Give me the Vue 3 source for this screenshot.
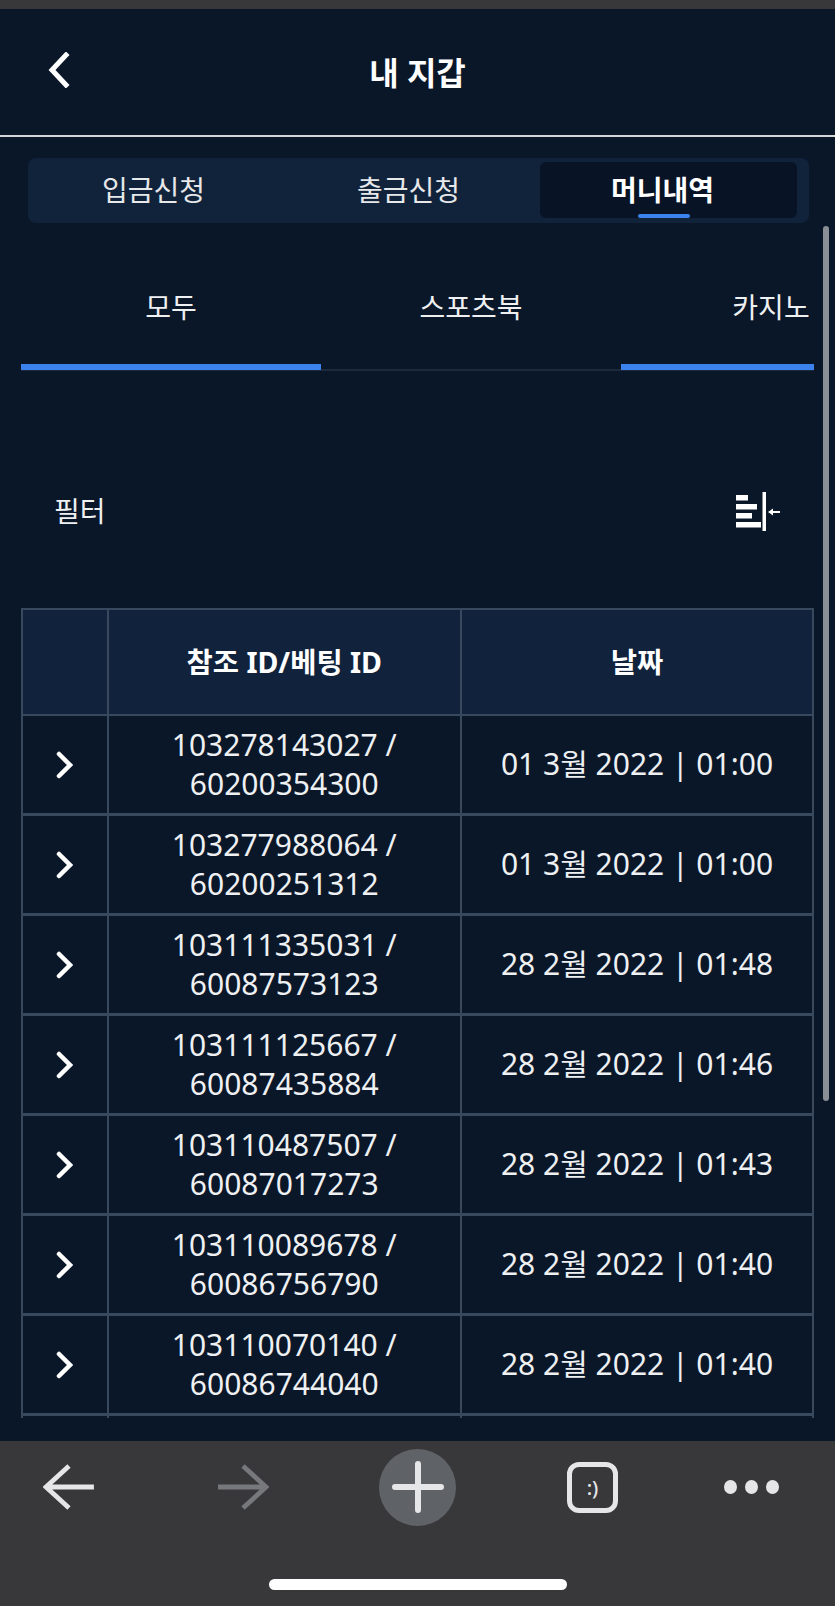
<script setup>
const rows = [
  ['103278143027', '60200354300', '01 3월 2022 | 01:00'],
  ['103277988064', '60200251312', '01 3월 2022 | 01:00'],
  ['103111335031', '60087573123', '28 2월 2022 | 01:48'],
  ['103111125667', '60087435884', '28 2월 2022 | 01:46'],
  ['103110487507', '60087017273', '28 2월 2022 | 01:43'],
  ['103110089678', '60086756790', '28 2월 2022 | 01:40'],
  ['103110070140', '60086744040', '28 2월 2022 | 01:40'],
]
</script>

<template>
  <div class="phone">
    <div class="top-strip"></div>
    <main class="page">
      <header class="header">
        <svg class="back" width="24" height="36" viewBox="0 0 24 36">
          <path d="M20 3 L6 18 L20 33" fill="none" stroke="#fff" stroke-width="5" stroke-linecap="square" />
        </svg>
        <h1>내 지갑</h1>
      </header>

      <nav class="tabs">
        <div class="tab">입금신청</div>
        <div class="tab">출금신청</div>
        <div class="tab active">머니내역<span class="tab-mark"></span></div>
      </nav>

      <div class="subtabs">
        <div class="subtab on">모두</div>
        <div class="subtab">스포츠북</div>
        <div class="subtab on">카지노</div>
      </div>

      <div class="filter">
        <span>필터</span>
        <svg width="44" height="40" viewBox="0 0 44 40">
          <g fill="#fff">
            <rect x="0" y="3" width="12" height="5.5" />
            <rect x="0" y="12" width="21" height="5.5" />
            <rect x="0" y="21" width="16" height="5.5" />
            <rect x="0" y="30" width="25" height="5.5" />
            <rect x="26.5" y="0" width="3.5" height="39" />
            <rect x="35" y="19" width="9" height="2" />
            <path d="M32 20 L37 16.5 V23.5 Z" />
          </g>
        </svg>
      </div>

      <div class="table-wrap">
        <table>
          <thead>
            <tr>
              <th class="col-arrow"></th>
              <th class="col-id">참조 ID/베팅 ID</th>
              <th>날짜</th>
            </tr>
          </thead>
          <tbody>
            <tr v-for="row in rows" :key="row[0]">
              <td>
                <svg class="chev" width="18" height="28" viewBox="0 0 18 28">
                  <path d="M4 3 L15 14 L4 25" fill="none" stroke="#fff" stroke-width="4.5" stroke-linecap="round" />
                </svg>
              </td>
              <td>{{ row[0] }} /<br />{{ row[1] }}</td>
              <td>{{ row[2] }}</td>
            </tr>
            <tr><td></td><td></td><td></td></tr>
          </tbody>
        </table>
      </div>

      <div class="scrollbar"></div>
    </main>

    <footer class="browser-bar">
      <div class="browser-icons">
        <svg width="52" height="46" viewBox="0 0 54 48">
          <path d="M27 2 L3 24 L27 46 M3 24 H53" fill="none" stroke="#e6e6e8" stroke-width="5" />
        </svg>
        <svg width="52" height="46" viewBox="0 0 54 48">
          <path d="M27 2 L51 24 L27 46 M1 24 H51" fill="none" stroke="#77787b" stroke-width="5" />
        </svg>
        <div class="plus">
          <svg width="52" height="52" viewBox="0 0 52 52">
            <path d="M26 3 V49 M3 26 H49" fill="none" stroke="#e6e6e8" stroke-width="6" stroke-linecap="round" />
          </svg>
        </div>
        <div class="face">:)</div>
        <div class="dots"><i></i><i></i><i></i></div>
      </div>
      <div class="home"></div>
    </footer>
  </div>
</template>

<style scoped>
.phone {
  width: 835px;
  height: 1606px;
  display: flex;
  flex-direction: column;
  overflow: hidden;
  background: #0a1729;
  color: #eef0f2;
  font-family: "Noto Sans", "Noto Sans CJK KR", sans-serif;
}
.top-strip {
  height: 9px;
  background: #38383b;
}
.page {
  position: relative;
  flex: 1;
  min-height: 0;
  overflow: hidden;
  background: #0a1729;
}
.header {
  height: 126px;
  border-bottom: 2px solid #d4d6d8;
  display: flex;
  align-items: center;
  justify-content: center;
  position: relative;
}
.header h1 {
  margin: 0 0 2px;
  font-size: 32px;
  font-weight: 700;
  color: #fff;
}
.back {
  position: absolute;
  left: 46px;
  top: 43px;
}
.tabs {
  margin: 21px 26px 0 28px;
  height: 65px;
  padding: 4px 12px 5px 0;
  box-sizing: border-box;
  border-radius: 8px;
  background: #11233b;
  display: flex;
}
.tab {
  flex: 0 0 255px;
  padding: 0 4px 3px 0;
  box-sizing: border-box;
  display: flex;
  align-items: center;
  justify-content: center;
  font-size: 28px;
  color: #e6e8ea;
  position: relative;
  border-radius: 6px;
}
.tab.active {
  flex: 1;
  margin-left: 2px;
  padding-right: 12px;
  background: #081325;
  color: #fff;
  font-weight: 700;
}
.tab-mark {
  position: absolute;
  bottom: 0;
  left: 98px;
  width: 52px;
  height: 4px;
  border-radius: 2px;
  background: #3b82ee;
}
.subtabs {
  margin: 21px 21px 0;
  width: 793px;
  display: flex;
  overflow: hidden;
}
.subtab {
  flex: 0 0 300px;
  height: 127px;
  padding-bottom: 4px;
  box-sizing: border-box;
  display: flex;
  align-items: center;
  justify-content: center;
  font-size: 28px;
  color: #eef0f2;
  box-shadow: inset 0 -2px 0 #1c2a3c;
}
.subtab.on {
  box-shadow: inset 0 -1px 0 #1c2a3c, inset 0 -7px 0 #3b82ee;
}
.filter {
  margin-top: 119px;
  padding: 0 54px;
  height: 40px;
  display: flex;
  align-items: center;
  justify-content: space-between;
  font-size: 28px;
}
.filter svg {
  margin: 3px 1px 0 0;
}
.table-wrap {
  margin: 78px 21px 0;
  width: 793px;
  height: 810px;
  overflow: hidden;
}
table {
  width: 100%;
  table-layout: fixed;
  border-collapse: collapse;
  font-size: 30px;
  line-height: 38.5px;
}
th, td {
  border: 2px solid #39495d;
  text-align: center;
  padding: 0;
}
td {
  height: 97px;
  border-bottom-width: 3px;
  color: #eef0f2;
}
thead tr {
  background: #11233c;
}
th {
  height: 104px;
  font-size: 28.5px;
  font-weight: 700;
  color: #fff;
}
.col-arrow {
  width: 83.5px;
}
.col-id {
  width: 351.5px;
}
.chev {
  display: block;
  margin: 0 0 0 32px;
}
.scrollbar {
  position: absolute;
  right: 6px;
  top: 217px;
  width: 6px;
  height: 875px;
  border-radius: 3px;
  background: #8a8f96;
}
.browser-bar {
  height: 165px;
  flex: none;
  background: #38383b;
  position: relative;
}
.browser-icons {
  height: 92px;
  padding: 0 0 0 43px;
  display: flex;
  align-items: center;
}
.browser-icons > svg:nth-child(1) {
  margin-right: 122px;
}
.browser-icons > svg:nth-child(2) {
  margin-right: 110px;
}
.plus {
  width: 77px;
  height: 77px;
  border-radius: 50%;
  background: #5f6267;
  display: flex;
  align-items: center;
  justify-content: center;
  margin-right: 111px;
}
.face {
  width: 51px;
  height: 51px;
  box-sizing: border-box;
  border: 5px solid #e6e6e8;
  border-radius: 12px;
  display: flex;
  align-items: center;
  justify-content: center;
  font-size: 20px;
  font-weight: 500;
  color: #e6e6e8;
  margin-right: 106px;
}
.dots {
  display: flex;
  gap: 8px;
}
.dots i {
  width: 13px;
  height: 14px;
  border-radius: 50%;
  background: #e6e6e8;
}
.home {
  position: absolute;
  left: 269px;
  top: 138px;
  width: 298px;
  height: 11px;
  border-radius: 6px;
  background: #fff;
}
</style>

<style>
html, body { background: #38383b; }
</style>
